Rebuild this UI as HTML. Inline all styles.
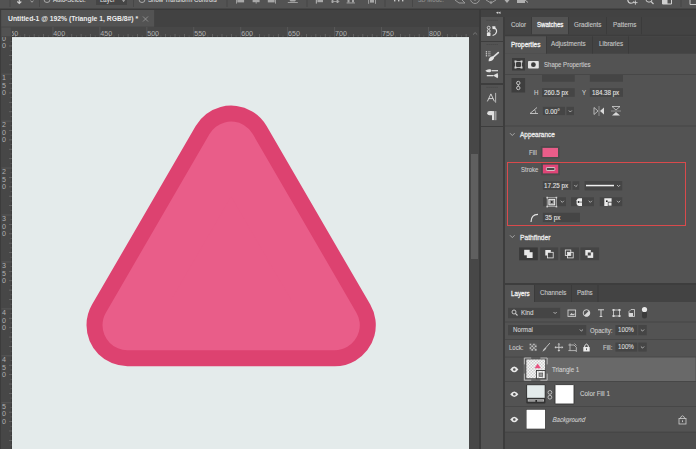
<!DOCTYPE html>
<html><head><meta charset="utf-8">
<style>
*{margin:0;padding:0;box-sizing:border-box}
html,body{width:696px;height:449px;overflow:hidden;background:#535353}
body{position:relative;font-family:"Liberation Sans",sans-serif;color:#c4c4c4;font-size:6.3px}
.a{position:absolute}
.t{position:absolute;white-space:nowrap;line-height:1}
svg{position:absolute;left:0;top:0;overflow:visible}
</style></head><body>
<svg width="696" height="449"><rect x="0" y="0" width="696" height="8.7" fill="#535353"/><rect x="9.5" y="0" width="1" height="7" fill="#474747"/><rect x="39" y="0" width="1" height="7" fill="#474747"/><rect x="133" y="0" width="1" height="7" fill="#474747"/><rect x="226.5" y="0" width="1" height="7" fill="#474747"/><rect x="306.5" y="0" width="1" height="7" fill="#474747"/><rect x="384.5" y="0" width="1" height="7" fill="#474747"/><rect x="412" y="0" width="1" height="7" fill="#474747"/><rect x="680.5" y="0" width="1" height="7" fill="#474747"/></svg>
<div class="t" style="left:53px;top:-3.26px;color:#dadada;font-size:6.48px;-webkit-text-stroke:0.12px #dadada;transform:scaleX(0.9259);transform-origin:0 0;">Auto-Select:</div>
<svg width="696" height="449"><rect x="96" y="0" width="31" height="5" fill="#454545"/></svg>
<div class="t" style="left:100px;top:-3.26px;color:#dadada;font-size:6.48px;-webkit-text-stroke:0.12px #dadada;transform:scaleX(0.9259);transform-origin:0 0;">Layer</div>
<div class="t" style="left:148px;top:-3.26px;color:#dadada;font-size:6.59px;-webkit-text-stroke:0.12px #dadada;transform:scaleX(0.9259);transform-origin:0 0;">Show Transform Controls</div>
<div class="t" style="left:418px;top:-3.26px;color:#8e8e8e;font-size:6.48px;-webkit-text-stroke:0.12px #8e8e8e;transform:scaleX(0.9259);transform-origin:0 0;">3D Mode:</div>
<svg width="696" height="449"><rect x="0" y="8.7" width="480" height="18.3" fill="#424242"/><rect x="1.2" y="9.9" width="153" height="16.8" fill="#535353"/></svg>
<div class="t" style="left:8px;top:15.80px;color:#ececec;font-size:6.80px;-webkit-text-stroke:0.12px #ececec;font-weight:bold;-webkit-text-stroke:0;">Untitled-1 @ 192% (Triangle 1, RGB/8#) *</div>
<svg width="696" height="449"><rect x="0" y="27" width="470" height="10" fill="#474747"/><rect x="0" y="27" width="12" height="422" fill="#474747"/></svg>
<svg width="696" height="449"><rect x="12" y="36.2" width="458" height="1.1" fill="#3d3d3d"/><rect x="11" y="37" width="1" height="412" fill="#3d3d3d"/><rect x="14.99" y="34" width="0.8" height="3" fill="#6a6a6a"/><rect x="19.68" y="35.2" width="0.8" height="1.8" fill="#5a5a5a"/><rect x="24.38" y="34" width="0.8" height="3" fill="#6a6a6a"/><rect x="29.07" y="35.2" width="0.8" height="1.8" fill="#5a5a5a"/><rect x="33.77" y="34" width="0.8" height="3" fill="#6a6a6a"/><rect x="38.46" y="35.2" width="0.8" height="1.8" fill="#5a5a5a"/><rect x="43.16" y="34" width="0.8" height="3" fill="#6a6a6a"/><rect x="47.85" y="35.2" width="0.8" height="1.8" fill="#5a5a5a"/><text x="6.4" y="35.5" font-size="7.1" fill="#b0b0b0" font-family="Liberation Sans">350</text><rect x="52.55" y="27" width="0.8" height="10" fill="#5c5c5c"/><rect x="57.24" y="35.2" width="0.8" height="1.8" fill="#5a5a5a"/><rect x="61.94" y="34" width="0.8" height="3" fill="#6a6a6a"/><rect x="66.63" y="35.2" width="0.8" height="1.8" fill="#5a5a5a"/><rect x="71.33" y="34" width="0.8" height="3" fill="#6a6a6a"/><rect x="76.03" y="35.2" width="0.8" height="1.8" fill="#5a5a5a"/><rect x="80.72" y="34" width="0.8" height="3" fill="#6a6a6a"/><rect x="85.41" y="35.2" width="0.8" height="1.8" fill="#5a5a5a"/><rect x="90.11" y="34" width="0.8" height="3" fill="#6a6a6a"/><rect x="94.81" y="35.2" width="0.8" height="1.8" fill="#5a5a5a"/><text x="53.3" y="35.5" font-size="7.1" fill="#b0b0b0" font-family="Liberation Sans">400</text><rect x="99.50" y="27" width="0.8" height="10" fill="#5c5c5c"/><rect x="104.19" y="35.2" width="0.8" height="1.8" fill="#5a5a5a"/><rect x="108.89" y="34" width="0.8" height="3" fill="#6a6a6a"/><rect x="113.59" y="35.2" width="0.8" height="1.8" fill="#5a5a5a"/><rect x="118.28" y="34" width="0.8" height="3" fill="#6a6a6a"/><rect x="122.97" y="35.2" width="0.8" height="1.8" fill="#5a5a5a"/><rect x="127.67" y="34" width="0.8" height="3" fill="#6a6a6a"/><rect x="132.37" y="35.2" width="0.8" height="1.8" fill="#5a5a5a"/><rect x="137.06" y="34" width="0.8" height="3" fill="#6a6a6a"/><rect x="141.75" y="35.2" width="0.8" height="1.8" fill="#5a5a5a"/><text x="100.3" y="35.5" font-size="7.1" fill="#b0b0b0" font-family="Liberation Sans">450</text><rect x="146.45" y="27" width="0.8" height="10" fill="#5c5c5c"/><rect x="151.14" y="35.2" width="0.8" height="1.8" fill="#5a5a5a"/><rect x="155.84" y="34" width="0.8" height="3" fill="#6a6a6a"/><rect x="160.53" y="35.2" width="0.8" height="1.8" fill="#5a5a5a"/><rect x="165.23" y="34" width="0.8" height="3" fill="#6a6a6a"/><rect x="169.92" y="35.2" width="0.8" height="1.8" fill="#5a5a5a"/><rect x="174.62" y="34" width="0.8" height="3" fill="#6a6a6a"/><rect x="179.31" y="35.2" width="0.8" height="1.8" fill="#5a5a5a"/><rect x="184.01" y="34" width="0.8" height="3" fill="#6a6a6a"/><rect x="188.70" y="35.2" width="0.8" height="1.8" fill="#5a5a5a"/><text x="147.2" y="35.5" font-size="7.1" fill="#b0b0b0" font-family="Liberation Sans">500</text><rect x="193.40" y="27" width="0.8" height="10" fill="#5c5c5c"/><rect x="198.10" y="35.2" width="0.8" height="1.8" fill="#5a5a5a"/><rect x="202.79" y="34" width="0.8" height="3" fill="#6a6a6a"/><rect x="207.49" y="35.2" width="0.8" height="1.8" fill="#5a5a5a"/><rect x="212.18" y="34" width="0.8" height="3" fill="#6a6a6a"/><rect x="216.88" y="35.2" width="0.8" height="1.8" fill="#5a5a5a"/><rect x="221.57" y="34" width="0.8" height="3" fill="#6a6a6a"/><rect x="226.27" y="35.2" width="0.8" height="1.8" fill="#5a5a5a"/><rect x="230.96" y="34" width="0.8" height="3" fill="#6a6a6a"/><rect x="235.66" y="35.2" width="0.8" height="1.8" fill="#5a5a5a"/><text x="194.2" y="35.5" font-size="7.1" fill="#b0b0b0" font-family="Liberation Sans">550</text><rect x="240.35" y="27" width="0.8" height="10" fill="#5c5c5c"/><rect x="245.05" y="35.2" width="0.8" height="1.8" fill="#5a5a5a"/><rect x="249.74" y="34" width="0.8" height="3" fill="#6a6a6a"/><rect x="254.44" y="35.2" width="0.8" height="1.8" fill="#5a5a5a"/><rect x="259.13" y="34" width="0.8" height="3" fill="#6a6a6a"/><rect x="263.83" y="35.2" width="0.8" height="1.8" fill="#5a5a5a"/><rect x="268.52" y="34" width="0.8" height="3" fill="#6a6a6a"/><rect x="273.22" y="35.2" width="0.8" height="1.8" fill="#5a5a5a"/><rect x="277.91" y="34" width="0.8" height="3" fill="#6a6a6a"/><rect x="282.61" y="35.2" width="0.8" height="1.8" fill="#5a5a5a"/><text x="241.2" y="35.5" font-size="7.1" fill="#b0b0b0" font-family="Liberation Sans">600</text><rect x="287.30" y="27" width="0.8" height="10" fill="#5c5c5c"/><rect x="292.00" y="35.2" width="0.8" height="1.8" fill="#5a5a5a"/><rect x="296.69" y="34" width="0.8" height="3" fill="#6a6a6a"/><rect x="301.38" y="35.2" width="0.8" height="1.8" fill="#5a5a5a"/><rect x="306.08" y="34" width="0.8" height="3" fill="#6a6a6a"/><rect x="310.78" y="35.2" width="0.8" height="1.8" fill="#5a5a5a"/><rect x="315.47" y="34" width="0.8" height="3" fill="#6a6a6a"/><rect x="320.17" y="35.2" width="0.8" height="1.8" fill="#5a5a5a"/><rect x="324.86" y="34" width="0.8" height="3" fill="#6a6a6a"/><rect x="329.56" y="35.2" width="0.8" height="1.8" fill="#5a5a5a"/><text x="288.1" y="35.5" font-size="7.1" fill="#b0b0b0" font-family="Liberation Sans">650</text><rect x="334.25" y="27" width="0.8" height="10" fill="#5c5c5c"/><rect x="338.95" y="35.2" width="0.8" height="1.8" fill="#5a5a5a"/><rect x="343.64" y="34" width="0.8" height="3" fill="#6a6a6a"/><rect x="348.34" y="35.2" width="0.8" height="1.8" fill="#5a5a5a"/><rect x="353.03" y="34" width="0.8" height="3" fill="#6a6a6a"/><rect x="357.73" y="35.2" width="0.8" height="1.8" fill="#5a5a5a"/><rect x="362.42" y="34" width="0.8" height="3" fill="#6a6a6a"/><rect x="367.12" y="35.2" width="0.8" height="1.8" fill="#5a5a5a"/><rect x="371.81" y="34" width="0.8" height="3" fill="#6a6a6a"/><rect x="376.51" y="35.2" width="0.8" height="1.8" fill="#5a5a5a"/><text x="335.1" y="35.5" font-size="7.1" fill="#b0b0b0" font-family="Liberation Sans">700</text><rect x="381.20" y="27" width="0.8" height="10" fill="#5c5c5c"/><rect x="385.90" y="35.2" width="0.8" height="1.8" fill="#5a5a5a"/><rect x="390.59" y="34" width="0.8" height="3" fill="#6a6a6a"/><rect x="395.29" y="35.2" width="0.8" height="1.8" fill="#5a5a5a"/><rect x="399.98" y="34" width="0.8" height="3" fill="#6a6a6a"/><rect x="404.68" y="35.2" width="0.8" height="1.8" fill="#5a5a5a"/><rect x="409.37" y="34" width="0.8" height="3" fill="#6a6a6a"/><rect x="414.07" y="35.2" width="0.8" height="1.8" fill="#5a5a5a"/><rect x="418.76" y="34" width="0.8" height="3" fill="#6a6a6a"/><rect x="423.46" y="35.2" width="0.8" height="1.8" fill="#5a5a5a"/><text x="382.0" y="35.5" font-size="7.1" fill="#b0b0b0" font-family="Liberation Sans">750</text><rect x="428.15" y="27" width="0.8" height="10" fill="#5c5c5c"/><rect x="432.85" y="35.2" width="0.8" height="1.8" fill="#5a5a5a"/><rect x="437.54" y="34" width="0.8" height="3" fill="#6a6a6a"/><rect x="442.24" y="35.2" width="0.8" height="1.8" fill="#5a5a5a"/><rect x="446.93" y="34" width="0.8" height="3" fill="#6a6a6a"/><rect x="451.63" y="35.2" width="0.8" height="1.8" fill="#5a5a5a"/><rect x="456.32" y="34" width="0.8" height="3" fill="#6a6a6a"/><rect x="461.02" y="35.2" width="0.8" height="1.8" fill="#5a5a5a"/><rect x="465.71" y="34" width="0.8" height="3" fill="#6a6a6a"/><text x="429.0" y="35.5" font-size="7.1" fill="#b0b0b0" font-family="Liberation Sans">800</text><text x="475.9" y="35.5" font-size="7.1" fill="#b0b0b0" font-family="Liberation Sans">850</text><rect x="10.2" y="40.88" width="1.8" height="0.8" fill="#5a5a5a"/><rect x="9" y="45.58" width="3" height="0.8" fill="#6a6a6a"/><rect x="10.2" y="50.27" width="1.8" height="0.8" fill="#5a5a5a"/><rect x="9" y="54.97" width="3" height="0.8" fill="#6a6a6a"/><rect x="10.2" y="59.66" width="1.8" height="0.8" fill="#5a5a5a"/><rect x="9" y="64.36" width="3" height="0.8" fill="#6a6a6a"/><rect x="10.2" y="69.06" width="1.8" height="0.8" fill="#5a5a5a"/><text x="2.1" y="33.4" font-size="7.1" fill="#b0b0b0" font-family="Liberation Sans">1</text><text x="2.1" y="40.8" font-size="7.1" fill="#b0b0b0" font-family="Liberation Sans">0</text><text x="2.1" y="48.2" font-size="7.1" fill="#b0b0b0" font-family="Liberation Sans">0</text><rect x="1.5" y="73.75" width="10.5" height="0.8" fill="#5c5c5c"/><rect x="10.2" y="78.44" width="1.8" height="0.8" fill="#5a5a5a"/><rect x="9" y="83.14" width="3" height="0.8" fill="#6a6a6a"/><rect x="10.2" y="87.84" width="1.8" height="0.8" fill="#5a5a5a"/><rect x="9" y="92.53" width="3" height="0.8" fill="#6a6a6a"/><rect x="10.2" y="97.22" width="1.8" height="0.8" fill="#5a5a5a"/><rect x="9" y="101.92" width="3" height="0.8" fill="#6a6a6a"/><rect x="10.2" y="106.62" width="1.8" height="0.8" fill="#5a5a5a"/><rect x="9" y="111.31" width="3" height="0.8" fill="#6a6a6a"/><rect x="10.2" y="116.00" width="1.8" height="0.8" fill="#5a5a5a"/><text x="2.1" y="80.3" font-size="7.1" fill="#b0b0b0" font-family="Liberation Sans">1</text><text x="2.1" y="87.8" font-size="7.1" fill="#b0b0b0" font-family="Liberation Sans">5</text><text x="2.1" y="95.1" font-size="7.1" fill="#b0b0b0" font-family="Liberation Sans">0</text><rect x="1.5" y="120.70" width="10.5" height="0.8" fill="#5c5c5c"/><rect x="10.2" y="125.40" width="1.8" height="0.8" fill="#5a5a5a"/><rect x="9" y="130.09" width="3" height="0.8" fill="#6a6a6a"/><rect x="10.2" y="134.78" width="1.8" height="0.8" fill="#5a5a5a"/><rect x="9" y="139.48" width="3" height="0.8" fill="#6a6a6a"/><rect x="10.2" y="144.18" width="1.8" height="0.8" fill="#5a5a5a"/><rect x="9" y="148.87" width="3" height="0.8" fill="#6a6a6a"/><rect x="10.2" y="153.56" width="1.8" height="0.8" fill="#5a5a5a"/><rect x="9" y="158.26" width="3" height="0.8" fill="#6a6a6a"/><rect x="10.2" y="162.96" width="1.8" height="0.8" fill="#5a5a5a"/><text x="2.1" y="127.3" font-size="7.1" fill="#b0b0b0" font-family="Liberation Sans">2</text><text x="2.1" y="134.7" font-size="7.1" fill="#b0b0b0" font-family="Liberation Sans">0</text><text x="2.1" y="142.1" font-size="7.1" fill="#b0b0b0" font-family="Liberation Sans">0</text><rect x="1.5" y="167.65" width="10.5" height="0.8" fill="#5c5c5c"/><rect x="10.2" y="172.34" width="1.8" height="0.8" fill="#5a5a5a"/><rect x="9" y="177.04" width="3" height="0.8" fill="#6a6a6a"/><rect x="10.2" y="181.74" width="1.8" height="0.8" fill="#5a5a5a"/><rect x="9" y="186.43" width="3" height="0.8" fill="#6a6a6a"/><rect x="10.2" y="191.12" width="1.8" height="0.8" fill="#5a5a5a"/><rect x="9" y="195.82" width="3" height="0.8" fill="#6a6a6a"/><rect x="10.2" y="200.52" width="1.8" height="0.8" fill="#5a5a5a"/><rect x="9" y="205.21" width="3" height="0.8" fill="#6a6a6a"/><rect x="10.2" y="209.91" width="1.8" height="0.8" fill="#5a5a5a"/><text x="2.1" y="174.2" font-size="7.1" fill="#b0b0b0" font-family="Liberation Sans">2</text><text x="2.1" y="181.7" font-size="7.1" fill="#b0b0b0" font-family="Liberation Sans">5</text><text x="2.1" y="189.1" font-size="7.1" fill="#b0b0b0" font-family="Liberation Sans">0</text><rect x="1.5" y="214.60" width="10.5" height="0.8" fill="#5c5c5c"/><rect x="10.2" y="219.30" width="1.8" height="0.8" fill="#5a5a5a"/><rect x="9" y="223.99" width="3" height="0.8" fill="#6a6a6a"/><rect x="10.2" y="228.69" width="1.8" height="0.8" fill="#5a5a5a"/><rect x="9" y="233.38" width="3" height="0.8" fill="#6a6a6a"/><rect x="10.2" y="238.08" width="1.8" height="0.8" fill="#5a5a5a"/><rect x="9" y="242.77" width="3" height="0.8" fill="#6a6a6a"/><rect x="10.2" y="247.47" width="1.8" height="0.8" fill="#5a5a5a"/><rect x="9" y="252.16" width="3" height="0.8" fill="#6a6a6a"/><rect x="10.2" y="256.86" width="1.8" height="0.8" fill="#5a5a5a"/><text x="2.1" y="221.2" font-size="7.1" fill="#b0b0b0" font-family="Liberation Sans">3</text><text x="2.1" y="228.6" font-size="7.1" fill="#b0b0b0" font-family="Liberation Sans">0</text><text x="2.1" y="236.0" font-size="7.1" fill="#b0b0b0" font-family="Liberation Sans">0</text><rect x="1.5" y="261.55" width="10.5" height="0.8" fill="#5c5c5c"/><rect x="10.2" y="266.25" width="1.8" height="0.8" fill="#5a5a5a"/><rect x="9" y="270.94" width="3" height="0.8" fill="#6a6a6a"/><rect x="10.2" y="275.63" width="1.8" height="0.8" fill="#5a5a5a"/><rect x="9" y="280.33" width="3" height="0.8" fill="#6a6a6a"/><rect x="10.2" y="285.03" width="1.8" height="0.8" fill="#5a5a5a"/><rect x="9" y="289.72" width="3" height="0.8" fill="#6a6a6a"/><rect x="10.2" y="294.42" width="1.8" height="0.8" fill="#5a5a5a"/><rect x="9" y="299.11" width="3" height="0.8" fill="#6a6a6a"/><rect x="10.2" y="303.81" width="1.8" height="0.8" fill="#5a5a5a"/><text x="2.1" y="268.2" font-size="7.1" fill="#b0b0b0" font-family="Liberation Sans">3</text><text x="2.1" y="275.6" font-size="7.1" fill="#b0b0b0" font-family="Liberation Sans">5</text><text x="2.1" y="283.0" font-size="7.1" fill="#b0b0b0" font-family="Liberation Sans">0</text><rect x="1.5" y="308.50" width="10.5" height="0.8" fill="#5c5c5c"/><rect x="10.2" y="313.19" width="1.8" height="0.8" fill="#5a5a5a"/><rect x="9" y="317.89" width="3" height="0.8" fill="#6a6a6a"/><rect x="10.2" y="322.58" width="1.8" height="0.8" fill="#5a5a5a"/><rect x="9" y="327.28" width="3" height="0.8" fill="#6a6a6a"/><rect x="10.2" y="331.98" width="1.8" height="0.8" fill="#5a5a5a"/><rect x="9" y="336.67" width="3" height="0.8" fill="#6a6a6a"/><rect x="10.2" y="341.37" width="1.8" height="0.8" fill="#5a5a5a"/><rect x="9" y="346.06" width="3" height="0.8" fill="#6a6a6a"/><rect x="10.2" y="350.75" width="1.8" height="0.8" fill="#5a5a5a"/><text x="2.1" y="315.1" font-size="7.1" fill="#b0b0b0" font-family="Liberation Sans">4</text><text x="2.1" y="322.5" font-size="7.1" fill="#b0b0b0" font-family="Liberation Sans">0</text><text x="2.1" y="329.9" font-size="7.1" fill="#b0b0b0" font-family="Liberation Sans">0</text><rect x="1.5" y="355.45" width="10.5" height="0.8" fill="#5c5c5c"/><rect x="10.2" y="360.15" width="1.8" height="0.8" fill="#5a5a5a"/><rect x="9" y="364.84" width="3" height="0.8" fill="#6a6a6a"/><rect x="10.2" y="369.54" width="1.8" height="0.8" fill="#5a5a5a"/><rect x="9" y="374.23" width="3" height="0.8" fill="#6a6a6a"/><rect x="10.2" y="378.93" width="1.8" height="0.8" fill="#5a5a5a"/><rect x="9" y="383.62" width="3" height="0.8" fill="#6a6a6a"/><rect x="10.2" y="388.32" width="1.8" height="0.8" fill="#5a5a5a"/><rect x="9" y="393.01" width="3" height="0.8" fill="#6a6a6a"/><rect x="10.2" y="397.71" width="1.8" height="0.8" fill="#5a5a5a"/><text x="2.1" y="362.1" font-size="7.1" fill="#b0b0b0" font-family="Liberation Sans">4</text><text x="2.1" y="369.5" font-size="7.1" fill="#b0b0b0" font-family="Liberation Sans">5</text><text x="2.1" y="376.9" font-size="7.1" fill="#b0b0b0" font-family="Liberation Sans">0</text><rect x="1.5" y="402.40" width="10.5" height="0.8" fill="#5c5c5c"/><rect x="10.2" y="407.10" width="1.8" height="0.8" fill="#5a5a5a"/><rect x="9" y="411.79" width="3" height="0.8" fill="#6a6a6a"/><rect x="10.2" y="416.49" width="1.8" height="0.8" fill="#5a5a5a"/><rect x="9" y="421.18" width="3" height="0.8" fill="#6a6a6a"/><rect x="10.2" y="425.88" width="1.8" height="0.8" fill="#5a5a5a"/><rect x="9" y="430.57" width="3" height="0.8" fill="#6a6a6a"/><rect x="10.2" y="435.27" width="1.8" height="0.8" fill="#5a5a5a"/><rect x="9" y="439.96" width="3" height="0.8" fill="#6a6a6a"/><rect x="10.2" y="444.66" width="1.8" height="0.8" fill="#5a5a5a"/><text x="2.1" y="409.0" font-size="7.1" fill="#b0b0b0" font-family="Liberation Sans">5</text><text x="2.1" y="416.4" font-size="7.1" fill="#b0b0b0" font-family="Liberation Sans">0</text><text x="2.1" y="423.8" font-size="7.1" fill="#b0b0b0" font-family="Liberation Sans">0</text><text x="2.1" y="456.0" font-size="7.1" fill="#b0b0b0" font-family="Liberation Sans">5</text><text x="2.1" y="463.4" font-size="7.1" fill="#b0b0b0" font-family="Liberation Sans">5</text><text x="2.1" y="470.8" font-size="7.1" fill="#b0b0b0" font-family="Liberation Sans">0</text></svg>
<svg width="696" height="449"><rect x="0" y="27" width="12" height="10" fill="#474747"/><rect x="1.5" y="27.5" width="9.3" height="8.8" fill="#525252"/><rect x="0" y="9" width="1" height="440" fill="#3c3c3c"/><rect x="12" y="37.3" width="457.3" height="411.7" fill="#e4ebeb"/><rect x="12" y="37.3" width="457" height="1" fill="#edf2f2"/></svg>
<svg width="696" height="449">
<path d="M127.5 325.2 L231.15 146.6 L334.8 325.2 Z" fill="#dd4270" stroke="#dd4270" stroke-width="82" stroke-linejoin="round"/>
<path d="M127.5 325.2 L231.15 146.6 L334.8 325.2 Z" fill="#e95d89" stroke="#e95d89" stroke-width="50" stroke-linejoin="round"/>
</svg>
<svg width="696" height="449"><rect x="469" y="27" width="11" height="422" fill="#474747"/><rect x="471" y="154" width="7" height="105" fill="#5f5f5f"/><rect x="479" y="9" width="2" height="440" fill="#3a3a3a"/><rect x="481" y="8.7" width="215" height="8.3" fill="#424242"/><rect x="0" y="8.7" width="696" height="1.2" fill="#393939"/><rect x="481" y="17" width="24" height="432" fill="#3d3d3d"/><rect x="481" y="17" width="22" height="24" fill="#535353"/><rect x="481" y="42" width="22" height="41" fill="#535353"/><rect x="481" y="85" width="22" height="41" fill="#535353"/><rect x="481" y="127" width="22" height="322" fill="#535353"/><rect x="505" y="17" width="191" height="17.4" fill="#434343"/><rect x="532" y="17" width="36" height="17.4" fill="#535353"/><rect x="531" y="17" width="1" height="17.4" fill="#3b3b3b"/><rect x="568" y="17" width="1" height="17.4" fill="#3b3b3b"/><rect x="606" y="17" width="1" height="17.4" fill="#3b3b3b"/><rect x="641" y="17" width="1" height="17.4" fill="#3b3b3b"/><rect x="505" y="34.4" width="191" height="2" fill="#3d3d3d"/></svg>
<div class="t" style="left:510.8px;top:22.24px;color:#c6c6c6;font-size:6.80px;-webkit-text-stroke:0.12px #c6c6c6;transform:scaleX(0.9259);transform-origin:0 0;">Color</div>
<div class="t" style="left:537.3px;top:22.34px;color:#f0f0f0;font-size:6.59px;-webkit-text-stroke:0.3px #f0f0f0;transform:scaleX(0.9259);transform-origin:0 0;">Swatches</div>
<div class="t" style="left:574px;top:22.24px;color:#c6c6c6;font-size:6.80px;-webkit-text-stroke:0.12px #c6c6c6;transform:scaleX(0.9259);transform-origin:0 0;">Gradients</div>
<div class="t" style="left:612.7px;top:22.24px;color:#c6c6c6;font-size:6.80px;-webkit-text-stroke:0.12px #c6c6c6;transform:scaleX(0.9259);transform-origin:0 0;">Patterns</div>
<svg width="696" height="449"><rect x="505" y="36.4" width="191" height="17.4" fill="#434343"/><rect x="505" y="36.4" width="41" height="17.4" fill="#535353"/><rect x="546" y="36.4" width="1" height="17.4" fill="#3b3b3b"/><rect x="592" y="36.4" width="1" height="17.4" fill="#3b3b3b"/><rect x="628" y="36.4" width="1" height="17.4" fill="#3b3b3b"/></svg>
<div class="t" style="left:510.9px;top:41.84px;color:#f0f0f0;font-size:6.97px;-webkit-text-stroke:0.3px #f0f0f0;transform:scaleX(0.9259);transform-origin:0 0;">Properties</div>
<div class="t" style="left:551.4px;top:41.24px;color:#c6c6c6;font-size:6.80px;-webkit-text-stroke:0.12px #c6c6c6;transform:scaleX(0.9259);transform-origin:0 0;">Adjustments</div>
<div class="t" style="left:598.5px;top:41.24px;color:#c6c6c6;font-size:6.80px;-webkit-text-stroke:0.12px #c6c6c6;transform:scaleX(0.9259);transform-origin:0 0;">Libraries</div>
<svg width="696" height="449"><rect x="505" y="53.8" width="191" height="229.2" fill="#535353"/><rect x="512" y="58" width="13" height="12.5" fill="#3c3c3c"/></svg>
<div class="t" style="left:543.8px;top:62.04px;color:#cacaca;font-size:6.53px;-webkit-text-stroke:0.12px #cacaca;transform:scaleX(0.9259);transform-origin:0 0;">Shape Properties</div>
<svg width="696" height="449"><rect x="505" y="74" width="191" height="1" fill="#474747"/><rect x="542" y="75" width="32.7" height="6.7" fill="#454545"/><rect x="589.8" y="75" width="33.2" height="6.7" fill="#454545"/><rect x="511.5" y="78" width="13.6" height="14.5" fill="#3e3e3e"/></svg>
<div class="t" style="left:534.2px;top:89.94px;color:#cacaca;font-size:6.70px;-webkit-text-stroke:0.12px #cacaca;transform:scaleX(0.9259);transform-origin:0 0;">H</div>
<svg width="696" height="449"><rect x="542" y="88.2" width="32.7" height="8.6" fill="#454545"/></svg>
<div class="t" style="left:543.8px;top:89.94px;color:#e0e0e0;font-size:6.80px;-webkit-text-stroke:0.12px #e0e0e0;transform:scaleX(0.9259);transform-origin:0 0;">260.5 px</div>
<div class="t" style="left:581.8px;top:89.94px;color:#cacaca;font-size:6.70px;-webkit-text-stroke:0.12px #cacaca;transform:scaleX(0.9259);transform-origin:0 0;">Y</div>
<svg width="696" height="449"><rect x="589.8" y="88.2" width="33.2" height="8.6" fill="#454545"/></svg>
<div class="t" style="left:591.5px;top:89.94px;color:#e0e0e0;font-size:6.70px;-webkit-text-stroke:0.12px #e0e0e0;transform:scaleX(0.9259);transform-origin:0 0;">184.38 px</div>
<svg width="696" height="449"><rect x="542.8" y="106.8" width="22.2" height="8.3" fill="#454545"/></svg>
<div class="t" style="left:545px;top:108.54px;color:#e0e0e0;font-size:6.80px;-webkit-text-stroke:0.12px #e0e0e0;transform:scaleX(0.9259);transform-origin:0 0;">0.00°</div>
<svg width="696" height="449"><rect x="566.5" y="106.8" width="7.5" height="8.3" fill="#454545"/><rect x="505" y="125.5" width="191" height="1" fill="#474747"/></svg>
<div class="t" style="left:520px;top:132.04px;color:#e8e8e8;font-size:6.97px;-webkit-text-stroke:0.3px #e8e8e8;transform:scaleX(0.9259);transform-origin:0 0;">Appearance</div>
<div class="t" style="left:529.3px;top:149.94px;color:#cacaca;font-size:6.59px;-webkit-text-stroke:0.12px #cacaca;transform:scaleX(0.9259);transform-origin:0 0;">Fill</div>
<svg width="696" height="449"><rect x="540.7" y="146.1" width="18.9" height="12.3" fill="#4a4a4a"/><rect x="542.5" y="147.9" width="15.5" height="9.1" fill="#e95d89"/></svg>
<div class="t" style="left:521px;top:167.14px;color:#cacaca;font-size:6.48px;-webkit-text-stroke:0.12px #cacaca;transform:scaleX(0.9259);transform-origin:0 0;">Stroke</div>
<svg width="696" height="449"><rect x="541" y="163" width="19" height="12.3" fill="#4a4a4a"/><rect x="542.9" y="164.6" width="15.3" height="8.8" fill="#df4577"/><rect x="542.8" y="181.3" width="28.2" height="8.5" fill="#454545"/></svg>
<div class="t" style="left:544.2px;top:183.04px;color:#e0e0e0;font-size:6.80px;-webkit-text-stroke:0.12px #e0e0e0;transform:scaleX(0.9259);transform-origin:0 0;">17.25 px</div>
<svg width="696" height="449"><rect x="572.5" y="181.3" width="6.8" height="8.5" fill="#454545"/><rect x="584.6" y="181" width="37.7" height="9.4" fill="#454545"/><rect x="586" y="184.8" width="28" height="1.5" fill="#f0f0f0"/><rect x="543.1" y="197.3" width="22.899999999999977" height="8.9" fill="#454545"/><rect x="571" y="197.3" width="23" height="8.9" fill="#454545"/><rect x="599.7" y="197.3" width="22.59999999999991" height="8.9" fill="#454545"/><rect x="542.8" y="212.7" width="37.2" height="9.4" fill="#454545"/></svg>
<div class="t" style="left:545px;top:214.84px;color:#e0e0e0;font-size:6.80px;-webkit-text-stroke:0.12px #e0e0e0;transform:scaleX(0.9259);transform-origin:0 0;">35 px</div>
<div class="a" style="left:507px;top:162px;width:179px;height:64px;border:1.4px solid #d94a4c"></div>
<div class="t" style="left:519.7px;top:233.64px;color:#e8e8e8;font-size:7.24px;-webkit-text-stroke:0.3px #e8e8e8;transform:scaleX(0.9259);transform-origin:0 0;">Pathfinder</div>
<svg width="696" height="449"><rect x="519.1" y="247.4" width="18.699999999999932" height="12.9" fill="#3a3a3a"/><rect x="540.2" y="247.4" width="18.0" height="12.9" fill="#454545"/><rect x="560.3" y="247.4" width="18.700000000000045" height="12.9" fill="#454545"/><rect x="580.4" y="247.4" width="18.700000000000045" height="12.9" fill="#454545"/><rect x="505" y="283" width="191" height="2" fill="#3d3d3d"/><rect x="505" y="285" width="191" height="17" fill="#434343"/><rect x="505" y="285" width="29" height="17" fill="#535353"/><rect x="534" y="285" width="1" height="17" fill="#3b3b3b"/><rect x="571" y="285" width="1" height="17" fill="#3b3b3b"/><rect x="597.5" y="285" width="1" height="17" fill="#3b3b3b"/></svg>
<div class="t" style="left:510.7px;top:290.84px;color:#f0f0f0;font-size:6.70px;-webkit-text-stroke:0.3px #f0f0f0;transform:scaleX(0.9259);transform-origin:0 0;">Layers</div>
<div class="t" style="left:539.6px;top:290.24px;color:#c6c6c6;font-size:6.75px;-webkit-text-stroke:0.12px #c6c6c6;transform:scaleX(0.9259);transform-origin:0 0;">Channels</div>
<div class="t" style="left:576.6px;top:290.24px;color:#c6c6c6;font-size:6.63px;-webkit-text-stroke:0.12px #c6c6c6;transform:scaleX(0.9259);transform-origin:0 0;">Paths</div>
<svg width="696" height="449"><rect x="505" y="302" width="191" height="147" fill="#535353"/><rect x="508" y="307.8" width="52.2" height="10.5" fill="#454545"/></svg>
<div class="t" style="left:520.8px;top:309.84px;color:#d0d0d0;font-size:6.80px;-webkit-text-stroke:0.12px #d0d0d0;transform:scaleX(0.9259);transform-origin:0 0;">Kind</div>
<svg width="696" height="449"><rect x="505" y="321.5" width="191" height="1" fill="#474747"/><rect x="508" y="325" width="78.3" height="10.3" fill="#454545"/></svg>
<div class="t" style="left:512.5px;top:327.04px;color:#d0d0d0;font-size:6.70px;-webkit-text-stroke:0.12px #d0d0d0;transform:scaleX(0.9259);transform-origin:0 0;">Normal</div>
<div class="t" style="left:590.4px;top:327.74px;color:#cacaca;font-size:6.62px;-webkit-text-stroke:0.12px #cacaca;transform:scaleX(0.9259);transform-origin:0 0;">Opacity:</div>
<svg width="696" height="449"><rect x="615.4" y="325" width="21.9" height="10.3" fill="#454545"/></svg>
<div class="t" style="left:617.5px;top:327.34px;color:#d8d8d8;font-size:6.70px;-webkit-text-stroke:0.12px #d8d8d8;transform:scaleX(0.9259);transform-origin:0 0;">100%</div>
<svg width="696" height="449"><rect x="638.3" y="325" width="8.4" height="10.3" fill="#454545"/><rect x="505" y="339" width="191" height="1" fill="#474747"/></svg>
<div class="t" style="left:509px;top:344.54px;color:#cacaca;font-size:6.48px;-webkit-text-stroke:0.12px #cacaca;transform:scaleX(0.9259);transform-origin:0 0;">Lock:</div>
<div class="t" style="left:603px;top:344.64px;color:#cacaca;font-size:6.48px;-webkit-text-stroke:0.12px #cacaca;transform:scaleX(0.9259);transform-origin:0 0;">Fill:</div>
<svg width="696" height="449"><rect x="615.4" y="342.6" width="21.9" height="9" fill="#454545"/></svg>
<div class="t" style="left:617.5px;top:344.34px;color:#d8d8d8;font-size:6.70px;-webkit-text-stroke:0.12px #d8d8d8;transform:scaleX(0.9259);transform-origin:0 0;">100%</div>
<svg width="696" height="449"><rect x="638.3" y="342.6" width="8.4" height="9" fill="#454545"/><rect x="505" y="356.6" width="191" height="1" fill="#474747"/><rect x="523.5" y="357.5" width="172" height="23.5" fill="#696969"/><rect x="505" y="381" width="191" height="1" fill="#474747"/><rect x="505" y="406" width="191" height="1" fill="#474747"/><rect x="505" y="431.7" width="191" height="17.3" fill="#4c4c4c"/><rect x="505" y="431.7" width="191" height="1" fill="#454545"/></svg>
<svg width="696" height="449"><defs><pattern id="chk" x="526" y="359.2" width="3" height="3" patternUnits="userSpaceOnUse"><rect width="3" height="3" fill="#ffffff"/><rect width="1.5" height="1.5" fill="#c8c8c8"/><rect x="1.5" y="1.5" width="1.5" height="1.5" fill="#c8c8c8"/></pattern></defs><rect x="525.6" y="358.7" width="20.3" height="20.3" fill="#3a3a3a"/><rect x="526.3" y="359.4" width="18.9" height="18.9" fill="url(#chk)"/><path d="M524.4 364.4 V358 H531.2 M540.4 358 H547.2 V364.4 M547.2 373.6 V380.2 H540.4 M531.2 380.2 H524.4 V373.6" stroke="#c8c8c8" stroke-width="0.8" fill="none"/><path d="M534.6 368.3 L537.7 363.4 L540.8 368.3 Z" fill="#e8507f"/><rect x="536.4" y="370.5" width="8.8" height="8.2" fill="#f4f4f4" stroke="#3a3a3a" stroke-width="0.9"/><rect x="539" y="373" width="3.7" height="3.3" fill="#9a9a9a" stroke="#555" stroke-width="0.7"/><path d="M537.8 371.8 h1.2 M541.8 371.8 h1.2 M537.8 377.4 h1.2 M541.8 377.4 h1.2" stroke="#aaa" stroke-width="0.6"/></svg>
<div class="t" style="left:551.9px;top:366.84px;color:#cfcfcf;font-size:6.70px;-webkit-text-stroke:0.12px #cfcfcf;transform:scaleX(0.9259);transform-origin:0 0;">Triangle 1</div>
<div class="t" style="left:580.3px;top:391.34px;color:#cccccc;font-size:6.78px;-webkit-text-stroke:0.12px #cccccc;transform:scaleX(0.9259);transform-origin:0 0;">Color Fill 1</div>
<svg width="696" height="449"><rect x="526" y="409.2" width="19.6" height="20" fill="#2e2e2e"/><rect x="526.5" y="409.7" width="18.6" height="19" fill="#ffffff"/></svg>
<div class="t" style="left:551.6px;top:416.6px;color:#cccccc;font-size:6.8px;-webkit-text-stroke:0.12px #cccccc;transform:scaleX(0.9) skewX(-8deg);transform-origin:0 100%;font-style:italic">Background</div>
<svg width="696" height="449"><path d="M19.3 0 V3 M17.3 1.5 L19.3 3.5 L21.3 1.5" stroke="#d0d0d0" stroke-width="1.1" fill="none"/><path d="M30.5 0.8 L32 2.2 L33.5 0.8" stroke="#bdbdbd" stroke-width="0.8" fill="none"/><circle cx="47" cy="-0.5" r="3" stroke="#bdbdbd" stroke-width="0.8" fill="none"/><path d="M122 0.2 L125.2 0.2 L123.6 2 Z" fill="#bdbdbd"/><circle cx="142" cy="-0.5" r="3" stroke="#bdbdbd" stroke-width="0.8" fill="none"/><rect x="236" y="0" width="0.9" height="3.6" fill="#a8a8a8"/><rect x="237.3" y="0" width="6.8" height="2.4" fill="#a8a8a8"/><rect x="252.6" y="0" width="7" height="2.2" fill="#a8a8a8"/><rect x="255.7" y="0" width="0.9" height="3.6" fill="#a8a8a8"/><rect x="275" y="0" width="0.9" height="3.6" fill="#a8a8a8"/><rect x="267.8" y="0" width="6.8" height="2.4" fill="#a8a8a8"/><rect x="287.8" y="2" width="10" height="0.9" fill="#a8a8a8"/><path d="M289.5 0 H296 L295 1.6 H290.5 Z" fill="#a8a8a8"/><rect x="315.8" y="0" width="1.2" height="3.6" fill="#a8a8a8"/><rect x="317.4" y="0" width="5.6" height="2.2" fill="#a8a8a8"/><rect x="331.6" y="0" width="1.8" height="3" fill="#a8a8a8"/><rect x="336.6" y="0" width="1.8" height="3" fill="#a8a8a8"/><rect x="331.6" y="1" width="7.8" height="0.8" fill="#a8a8a8"/><rect x="347.5" y="0" width="2" height="2.4" fill="#a8a8a8"/><rect x="352" y="0" width="2" height="2.4" fill="#a8a8a8"/><rect x="346.6" y="2.5" width="8.4" height="0.9" fill="#a8a8a8"/><rect x="368.2" y="0" width="0.9" height="3.8" fill="#a8a8a8"/><rect x="375" y="0" width="0.9" height="3.8" fill="#a8a8a8"/><rect x="370" y="0" width="4" height="2.6" fill="#a8a8a8"/><rect x="394" y="0" width="1.4" height="1.4" fill="#c8c8c8"/><rect x="398" y="0" width="1.4" height="1.4" fill="#c8c8c8"/><rect x="402" y="0" width="1.4" height="1.4" fill="#c8c8c8"/><path d="M455 0 L459 3 L465 3 M462 0 L465 3" stroke="#9a9a9a" stroke-width="1" fill="none"/><circle cx="475" cy="-1" r="4.5" stroke="#9a9a9a" stroke-width="1" fill="none"/><circle cx="475" cy="-1" r="1.6" fill="#9a9a9a"/><path d="M486 0 L491 3 L496 0" stroke="#9a9a9a" stroke-width="1" fill="none"/><circle cx="491" cy="2.5" r="1.2" fill="#9a9a9a"/><path d="M504.5 0 L507 3 L509.5 0 Z" fill="#b0b0b0"/><rect x="517" y="0" width="8" height="3" fill="#b0b0b0"/><path d="M525 0 L528 2.5" stroke="#b0b0b0" stroke-width="1"/><path d="M627.8 -1 Q627.5 3 631 3.3 Q633 3.3 634 1.5" stroke="#d0d0d0" stroke-width="1.1" fill="none"/><path d="M633.3 2.6 H637.5 M635.4 0.5 V4.7" stroke="#d0d0d0" stroke-width="0.9"/><circle cx="649" cy="-1" r="3.2" stroke="#c8c8c8" stroke-width="1" fill="none"/><path d="M651 1.5 L653.5 4" stroke="#c8c8c8" stroke-width="1.2"/><path d="M662.5 0 V4 H671.5 V0" stroke="#d0d0d0" stroke-width="1" fill="none"/><rect x="662.5" y="0" width="5" height="4" fill="#d0d0d0"/><path d="M690 0 V4.5 H696" stroke="#c8c8c8" stroke-width="1" fill="none"/><path d="M143 16.5 L148 21.5 M148 16.5 L143 21.5" stroke="#9a9a9a" stroke-width="0.8"/><path d="M473 34.6 L475.1 32.6 L477.2 34.6" stroke="#8a8a8a" stroke-width="0.7" fill="none"/><path d="M498.2 11.5 L495.9 12.8 L498.2 14.1 Z M500.5 11.5 L498.2 12.8 L500.5 14.1 Z" fill="#d0d0d0"/><rect x="486.6" y="19.8" width="1" height="1" fill="#444444"/><rect x="488.6" y="19.8" width="1" height="1" fill="#444444"/><rect x="490.6" y="19.8" width="1" height="1" fill="#444444"/><rect x="492.6" y="19.8" width="1" height="1" fill="#444444"/><rect x="494.6" y="19.8" width="1" height="1" fill="#444444"/><rect x="496.6" y="19.8" width="1" height="1" fill="#444444"/><rect x="486.6" y="44.0" width="1" height="1" fill="#444444"/><rect x="488.6" y="44.0" width="1" height="1" fill="#444444"/><rect x="490.6" y="44.0" width="1" height="1" fill="#444444"/><rect x="492.6" y="44.0" width="1" height="1" fill="#444444"/><rect x="494.6" y="44.0" width="1" height="1" fill="#444444"/><rect x="496.6" y="44.0" width="1" height="1" fill="#444444"/><rect x="486.6" y="86.8" width="1" height="1" fill="#444444"/><rect x="488.6" y="86.8" width="1" height="1" fill="#444444"/><rect x="490.6" y="86.8" width="1" height="1" fill="#444444"/><rect x="492.6" y="86.8" width="1" height="1" fill="#444444"/><rect x="494.6" y="86.8" width="1" height="1" fill="#444444"/><rect x="496.6" y="86.8" width="1" height="1" fill="#444444"/><circle cx="488.7" cy="27.7" r="1.45" fill="none" stroke="#d8d8d8" stroke-width="0.9"/><circle cx="488.7" cy="31" r="1.45" fill="none" stroke="#d0d0d0" stroke-width="0.9"/><rect x="486.9" y="32.6" width="3.6" height="3.3" rx="0.4" fill="#e8e8e8"/><path d="M494 27.6 Q496.8 29 496.6 31.5 Q496.3 34.3 492.6 35.6" stroke="#e0e0e0" stroke-width="1.1" fill="none"/><path d="M492.2 26.2 L495.4 26.3 L495.2 29.3 L492.6 29.1 Z" fill="#e4e4e4"/><rect x="485.8" y="51.2" width="1.2" height="1.2" fill="#d8d8d8"/><rect x="487.8" y="51.2" width="2.8" height="1.2" fill="#9a9a9a"/><rect x="485.8" y="53.2" width="1.2" height="1.2" fill="#d8d8d8"/><rect x="487.8" y="53.2" width="2.8" height="1.2" fill="#9a9a9a"/><rect x="485.8" y="55.2" width="1.2" height="1.2" fill="#d8d8d8"/><rect x="487.8" y="55.2" width="2.8" height="1.2" fill="#9a9a9a"/><path d="M498.3 52.6 L493.2 57.2" stroke="#dcdcdc" stroke-width="1.7" stroke-linecap="round"/><path d="M493.6 56.2 L494 58.2 Q492.5 61.5 488.6 61.2 Q488.6 57.8 491.5 56.6 Z" fill="#e4e4e4"/><path d="M485.3 70.7 Q487.5 68.6 490.5 69.3 L491.6 70.7 L490.5 72.1 Q487.5 72.8 485.3 70.7 Z" fill="#e0e0e0"/><rect x="491.8" y="70.1" width="6.2" height="1.2" fill="#e0e0e0"/><rect x="486.8" y="75" width="6.5" height="1.3" fill="#e0e0e0"/><path d="M493 75.6 L497.6 73 Q498.6 75.6 497.6 78.2 Z" fill="#e0e0e0"/><path d="M487.4 101.4 L490.9 93.9 L494.4 101.4 M488.7 98.6 H493.1" stroke="#dcdcdc" stroke-width="0.9" fill="none"/><rect x="495.3" y="92.9" width="0.8" height="9.8" fill="#d0d0d0"/><path d="M492.2 111.1 H489.6 Q487.2 111.1 487.2 113.2 Q487.2 115.3 489.6 115.3 H492.2 Z" fill="#e0e0e0"/><rect x="492" y="111.1" width="2.2" height="9" fill="#e0e0e0"/><rect x="494.5" y="111.1" width="2" height="9.1" fill="#9c9c9c"/><rect x="515.5" y="61.5" width="6" height="6" fill="none" stroke="#d8d8d8" stroke-width="0.8"/><rect x="514.5" y="60.5" width="2" height="2" fill="#d8d8d8"/><rect x="520.5" y="60.5" width="2" height="2" fill="#d8d8d8"/><rect x="514.5" y="66.5" width="2" height="2" fill="#d8d8d8"/><rect x="520.5" y="66.5" width="2" height="2" fill="#d8d8d8"/><rect x="528" y="60.9" width="10.8" height="7.6" rx="0.8" fill="#e2e2e2"/><circle cx="533.4" cy="64.7" r="2.4" fill="#3a3a3a"/><circle cx="518.3" cy="83" r="1.7" fill="none" stroke="#d0d0d0" stroke-width="0.9"/><circle cx="518.3" cy="88" r="1.7" fill="none" stroke="#d0d0d0" stroke-width="0.9"/><path d="M518.3 84.7 V86.3" stroke="#d0d0d0" stroke-width="0.9"/><path d="M530 113.5 H538 M530 113.5 L537 107.5" stroke="#c8c8c8" stroke-width="0.9" fill="none"/><path d="M534.5 109.7 Q536 111.5 535.7 113.5" stroke="#c8c8c8" stroke-width="0.8" fill="none"/><path d="M568.8 110.5 L570.3 112 L571.8 110.5" stroke="#c4c4c4" stroke-width="0.85" fill="none"/><path d="M594 107.5 L598 111 L594 114.5 Z" fill="none" stroke="#d0d0d0" stroke-width="0.8"/><path d="M599 106 V116" stroke="#bbbbbb" stroke-width="0.6"/><path d="M604 107.5 L600 111 L604 114.5 Z" fill="#d8d8d8"/><path d="M612 106.5 L616 110 L620 106.5 Z" fill="none" stroke="#d0d0d0" stroke-width="0.8"/><path d="M611 111 H621" stroke="#bbbbbb" stroke-width="0.6"/><path d="M612 115.5 L616 112 L620 115.5 Z" fill="#d8d8d8"/><path d="M510 133.2 L512.3 135.5 L514.6 133.2" stroke="#bdbdbd" stroke-width="0.8" fill="none"/><rect x="546.4" y="167.5" width="8.4" height="3" rx="0.7" fill="#4a4a4a" stroke="#ececec" stroke-width="0.7"/><path d="M574.3 185 L575.9 186.6 L577.5 185" stroke="#c4c4c4" stroke-width="0.85" fill="none"/><path d="M617 185 L618.6 186.6 L620.2 185" stroke="#c4c4c4" stroke-width="0.85" fill="none"/><path d="M560.7 200.8 L562.3 202.4 L563.9 200.8" stroke="#c4c4c4" stroke-width="0.85" fill="none"/><path d="M588.7 200.8 L590.3 202.4 L591.9 200.8" stroke="#c4c4c4" stroke-width="0.85" fill="none"/><path d="M617.0 200.8 L618.5999999999999 202.4 L620.1999999999999 200.8" stroke="#c4c4c4" stroke-width="0.85" fill="none"/><rect x="547.2" y="197.6" width="9.2" height="9" fill="none" stroke="#bdbdbd" stroke-width="0.7"/><rect x="548.9" y="199.3" width="5.8" height="5.6" fill="#909090" stroke="#f0f0f0" stroke-width="1"/><circle cx="551.8" cy="202.1" r="1" fill="#222"/><rect x="546.4000000000001" y="196.79999999999998" width="1.6" height="1.6" fill="#d0d0d0"/><rect x="555.6" y="196.79999999999998" width="1.6" height="1.6" fill="#d0d0d0"/><rect x="546.4000000000001" y="205.79999999999998" width="1.6" height="1.6" fill="#d0d0d0"/><rect x="555.6" y="205.79999999999998" width="1.6" height="1.6" fill="#d0d0d0"/><path d="M582 198.3 H579 Q577.3 198.3 576.6 200.3 V204 Q577.3 206 579 206 H582 Z" fill="#ececec"/><circle cx="578.6" cy="202.1" r="1" fill="#222"/><rect x="580" y="201.6" width="2" height="1" fill="#777"/><path d="M604.3 198.3 H611.6 V201.8 H607.8 V206 H604.3 Z" fill="#ececec"/><rect x="606" y="200.4" width="1.6" height="1.6" fill="#222"/><rect x="608.5" y="202.6" width="3" height="3" fill="#ececec"/><path d="M531 222 Q531 214.5 538 214.3" stroke="#e0e0e0" stroke-width="1.2" fill="none"/><path d="M510 235.3 L512.3 237.6 L514.6 235.3" stroke="#bdbdbd" stroke-width="0.8" fill="none"/><rect x="524.2" y="249.8" width="5.5" height="5.5" fill="#e8e8e8"/><rect x="526.8" y="252.2" width="5.8" height="5.8" fill="#e8e8e8"/><rect x="545.3" y="250" width="5.5" height="5.5" fill="#e8e8e8"/><rect x="547.6" y="252.3" width="5.6" height="5.6" fill="#454545" stroke="#e8e8e8" stroke-width="0.8"/><rect x="565.3" y="250" width="5.5" height="5.5" fill="none" stroke="#e8e8e8" stroke-width="0.8"/><rect x="567.6" y="252.3" width="5.6" height="5.6" fill="none" stroke="#e8e8e8" stroke-width="0.8"/><rect x="567.6" y="252.3" width="3.2" height="3.2" fill="#e8e8e8"/><rect x="585.3" y="250" width="5.5" height="5.5" fill="#e8e8e8"/><rect x="587.6" y="252.3" width="5.6" height="5.6" fill="#e8e8e8"/><rect x="587.8" y="252.5" width="3" height="3" fill="#454545"/><circle cx="514" cy="312" r="2" fill="none" stroke="#d0d0d0" stroke-width="0.9"/><path d="M515.4 313.4 L517.5 315.5" stroke="#d0d0d0" stroke-width="1.1"/><path d="M553.5 312 L555.1 313.6 L556.7 312" stroke="#c4c4c4" stroke-width="0.85" fill="none"/><rect x="568" y="310" width="7.6" height="6.4" fill="none" stroke="#d0d0d0" stroke-width="0.9"/><path d="M569.5 315.2 L571.5 313 L573 314.3 L574.5 313.3 V315.2 Z" fill="#d0d0d0"/><circle cx="586.5" cy="313" r="3.3" fill="none" stroke="#d8d8d8" stroke-width="0.9"/><path d="M588.9 310.7 A3.3 3.3 0 0 1 584.2 315.4 Z" fill="#d8d8d8"/><path d="M598 309.8 H604 M601 309.8 V316.5 M599.7 316.5 H602.3" stroke="#d8d8d8" stroke-width="1" fill="none"/><rect x="613.5" y="310" width="6" height="6" fill="none" stroke="#d8d8d8" stroke-width="0.8"/><rect x="612.5" y="309" width="2" height="2" fill="#d8d8d8"/><rect x="618.5" y="309" width="2" height="2" fill="#d8d8d8"/><rect x="612.5" y="315" width="2" height="2" fill="#d8d8d8"/><rect x="618.5" y="315" width="2" height="2" fill="#d8d8d8"/><path d="M629 311.5 L631 309.5 H634.5 V316.5 H629 Z" fill="none" stroke="#d8d8d8" stroke-width="0.8"/><rect x="629" y="313" width="4" height="3.5" fill="#d8d8d8"/><rect x="642" y="311" width="5" height="7.5" rx="2.5" fill="#3a3a3a"/><circle cx="644.5" cy="309.5" r="2.6" fill="#e8e8e8"/><path d="M579.8 329.5 L581.4 331.1 L583 329.5" stroke="#c4c4c4" stroke-width="0.85" fill="none"/><path d="M640.9 329.5 L642.5 331.1 L644.1 329.5" stroke="#c4c4c4" stroke-width="0.85" fill="none"/><rect x="529.60" y="343.70" width="1.75" height="1.75" fill="#bdbdbd"/><rect x="529.60" y="345.45" width="1.75" height="1.75" fill="#6a6a6a"/><rect x="529.60" y="347.20" width="1.75" height="1.75" fill="#bdbdbd"/><rect x="529.60" y="348.95" width="1.75" height="1.75" fill="#6a6a6a"/><rect x="531.35" y="343.70" width="1.75" height="1.75" fill="#6a6a6a"/><rect x="531.35" y="345.45" width="1.75" height="1.75" fill="#bdbdbd"/><rect x="531.35" y="347.20" width="1.75" height="1.75" fill="#6a6a6a"/><rect x="531.35" y="348.95" width="1.75" height="1.75" fill="#bdbdbd"/><rect x="533.10" y="343.70" width="1.75" height="1.75" fill="#bdbdbd"/><rect x="533.10" y="345.45" width="1.75" height="1.75" fill="#6a6a6a"/><rect x="533.10" y="347.20" width="1.75" height="1.75" fill="#bdbdbd"/><rect x="533.10" y="348.95" width="1.75" height="1.75" fill="#6a6a6a"/><rect x="534.85" y="343.70" width="1.75" height="1.75" fill="#6a6a6a"/><rect x="534.85" y="345.45" width="1.75" height="1.75" fill="#bdbdbd"/><rect x="534.85" y="347.20" width="1.75" height="1.75" fill="#6a6a6a"/><rect x="534.85" y="348.95" width="1.75" height="1.75" fill="#bdbdbd"/><path d="M549.6 343.4 L545.3 348.3" stroke="#c8c8c8" stroke-width="0.9" stroke-linecap="round"/><path d="M545.6 347.4 L546.3 348.3 Q545 351 542.4 351.8 Q542.8 349 545.6 347.4 Z" fill="#c8c8c8"/><path d="M558.9 344.5 V350.2 M556 347.35 H561.8" stroke="#d0d0d0" stroke-width="0.9"/><path d="M557.5 344.6 L558.9 343 L560.3 344.6 Z M557.5 350.1 L558.9 351.7 L560.3 350.1 Z M556.1 346 L554.5 347.35 L556.1 348.7 Z M561.7 346 L563.3 347.35 L561.7 348.7 Z" fill="#d0d0d0"/><path d="M568.4 345 H574 L576.3 347.3 V350.6 H570 V343.4 M568.4 350.6 H570 M576.3 350.6 V352" stroke="#c8c8c8" stroke-width="0.8" fill="none"/><path d="M574.5 343.5 L576.5 345.5" stroke="#c8c8c8" stroke-width="0.7"/><rect x="583.3" y="347" width="6.4" height="4.6" rx="0.3" fill="#ececec"/><path d="M584.7 347 V345.6 Q586.5 342.6 588.3 345.6 V347" stroke="#ececec" stroke-width="1" fill="none"/><rect x="586.1" y="348.3" width="0.9" height="1.8" fill="#555"/><path d="M640.9 346.5 L642.5 348.1 L644.1 346.5" stroke="#c4c4c4" stroke-width="0.85" fill="none"/><path d="M510.19999999999993 369.4 Q512.3 366.59999999999997 514.3 366.59999999999997 Q516.3 366.59999999999997 518.4 369.4 Q516.3 372.2 514.3 372.2 Q512.3 372.2 510.19999999999993 369.4 Z" fill="#e8e8e8"/><circle cx="514.3" cy="369.4" r="1.25" fill="#555555"/><path d="M510.19999999999993 394.2 Q512.3 391.4 514.3 391.4 Q516.3 391.4 518.4 394.2 Q516.3 397.0 514.3 397.0 Q512.3 397.0 510.19999999999993 394.2 Z" fill="#e8e8e8"/><circle cx="514.3" cy="394.2" r="1.25" fill="#555555"/><path d="M510.19999999999993 419.5 Q512.3 416.7 514.3 416.7 Q516.3 416.7 518.4 419.5 Q516.3 422.3 514.3 422.3 Q512.3 422.3 510.19999999999993 419.5 Z" fill="#e8e8e8"/><circle cx="514.3" cy="419.5" r="1.25" fill="#555555"/><rect x="526.3" y="384.4" width="19.2" height="19.2" rx="1" fill="#333333"/><rect x="527.1" y="385.2" width="17.6" height="12.6" fill="#e4ebeb"/><rect x="527.8" y="399.2" width="16.2" height="2.4" fill="#b4b4b4"/><rect x="528.8" y="399.9" width="14.2" height="0.8" fill="#8a8a8a"/><circle cx="536.2" cy="400.9" r="0.9" fill="#111"/><circle cx="549.9" cy="392.4" r="1.9" fill="none" stroke="#cfcfcf" stroke-width="0.8"/><circle cx="549.9" cy="397.2" r="1.9" fill="none" stroke="#cfcfcf" stroke-width="0.8"/><rect x="555" y="384.6" width="19" height="19.4" rx="0.8" fill="#ffffff" stroke="#333" stroke-width="0.9"/><rect x="679" y="418.5" width="7" height="5.5" fill="none" stroke="#d0d0d0" stroke-width="0.8"/><path d="M680.7 418.5 V417 Q682.5 414.5 684.3 417 V418.5" stroke="#d0d0d0" stroke-width="0.8" fill="none"/><rect x="682.1" y="420.3" width="0.9" height="1.8" fill="#d0d0d0"/></svg>
</body></html>
